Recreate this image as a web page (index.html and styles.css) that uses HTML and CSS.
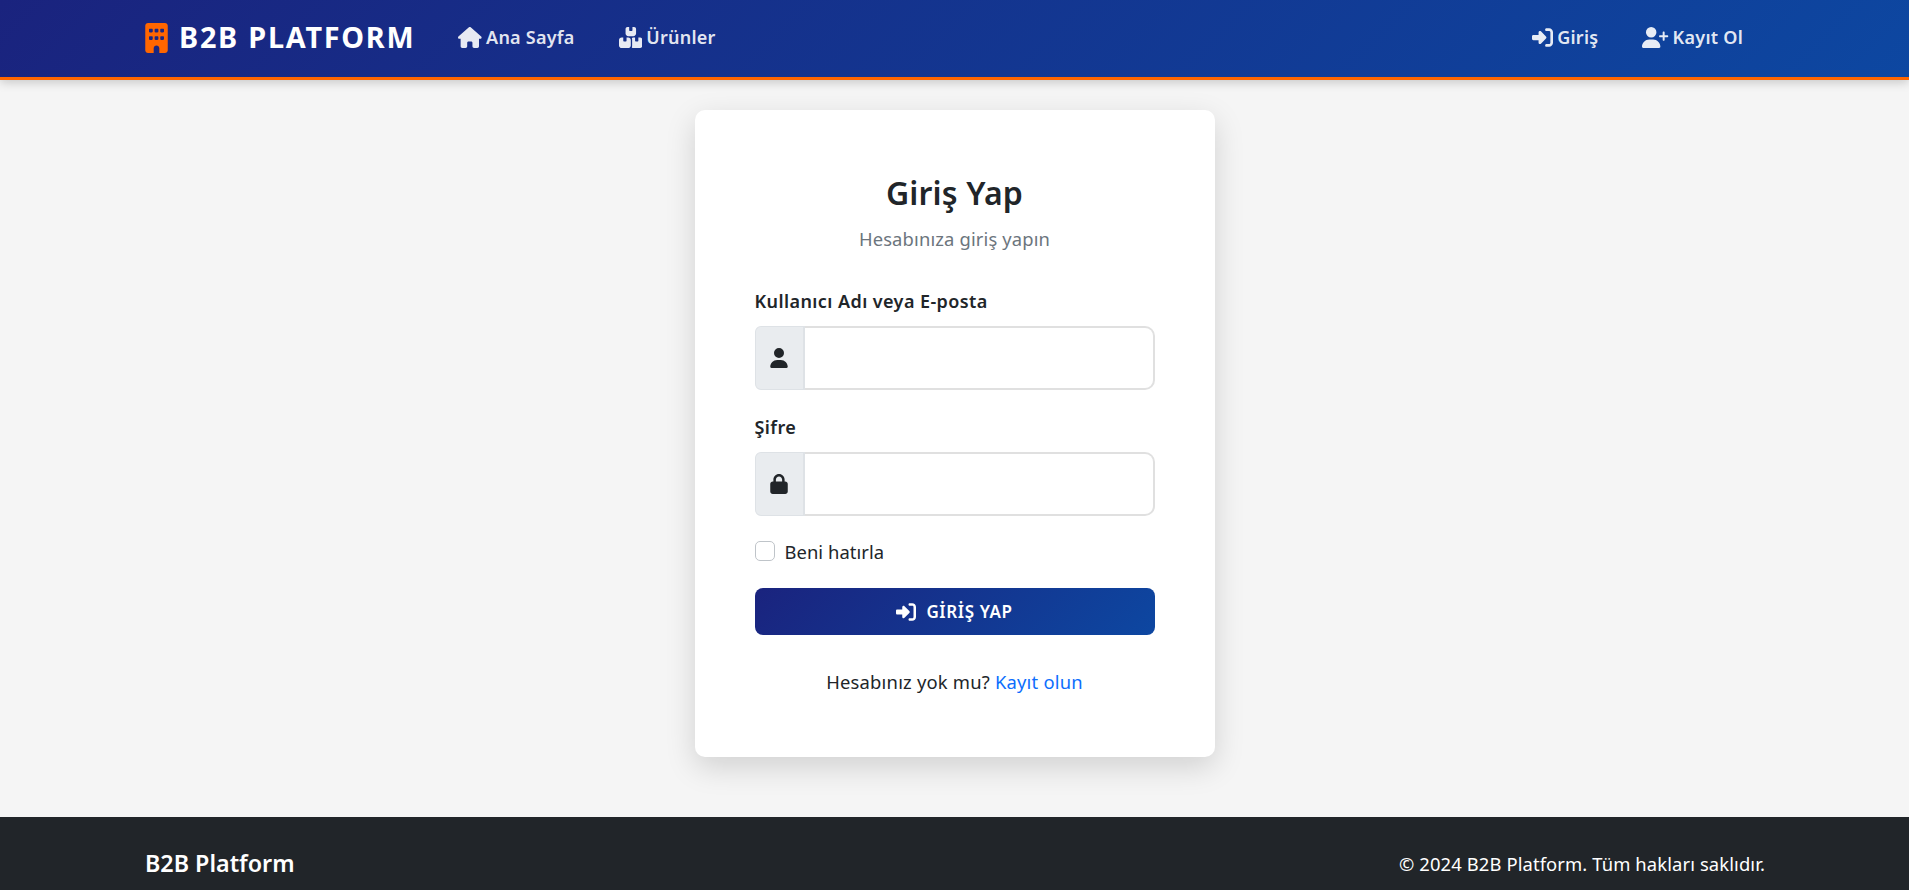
FILE: index.html
```html
<!DOCTYPE html>
<html lang="tr">
<head>
<meta charset="utf-8">
<title>Giriş Yap - B2B Platform</title>
<link rel="stylesheet" href="styles.css">
</head>
<body>
<header class="navbar">
  <a class="brand" href="#">
    <svg class="brand-icon" viewBox="0 0 384 512"><path d="M48 0C21.5 0 0 21.5 0 48V464c0 26.5 21.5 48 48 48h96V432c0-26.5 21.5-48 48-48s48 21.5 48 48v80h96c26.5 0 48-21.5 48-48V48c0-26.5-21.5-48-48-48H48zM64 240c0-8.8 7.2-16 16-16h32c8.8 0 16 7.2 16 16v32c0 8.8-7.2 16-16 16H80c-8.8 0-16-7.2-16-16V240zm112-16h32c8.8 0 16 7.2 16 16v32c0 8.8-7.2 16-16 16H176c-8.8 0-16-7.2-16-16V240c0-8.8 7.2-16 16-16zm80 16c0-8.8 7.2-16 16-16h32c8.8 0 16 7.2 16 16v32c0 8.8-7.2 16-16 16H272c-8.8 0-16-7.2-16-16V240zM80 96h32c8.8 0 16 7.2 16 16v32c0 8.8-7.2 16-16 16H80c-8.8 0-16-7.2-16-16V112c0-8.8 7.2-16 16-16zm80 16c0-8.8 7.2-16 16-16h32c8.8 0 16 7.2 16 16v32c0 8.8-7.2 16-16 16H176c-8.8 0-16-7.2-16-16V112zM272 96h32c8.8 0 16 7.2 16 16v32c0 8.8-7.2 16-16 16H272c-8.8 0-16-7.2-16-16V112c0-8.8 7.2-16 16-16z"/></svg>
    <span>B2B PLATFORM</span>
  </a>
  <nav class="nav-left">
    <a class="nav-link" href="#"><svg class="nav-icon" viewBox="0 0 576 512"><path d="M575.8 255.5c0 18-15 32.1-32 32.1h-32l.7 160.2c0 2.7-.2 5.4-.5 8.1V472c0 22.1-17.9 40-40 40H456c-1.1 0-2.2 0-3.3-.1c-1.4 .1-2.8 .1-4.2 .1H416 392c-22.1 0-40-17.9-40-40V448 384c0-17.7-14.3-32-32-32H256c-17.7 0-32 14.3-32 32v64 24c0 22.1-17.9 40-40 40H160 128.1c-1.5 0-3-.1-4.5-.2c-1.2 .1-2.4 .2-3.6 .2H104c-22.1 0-40-17.9-40-40V360c0-.9 0-1.9 .1-2.8V287.6H32c-18 0-32-14-32-32.1c0-9 3-17 10-24L266.4 8c7-7 15-8 22-8s15 2 21 7L564.8 231.5c8 7 12 15 11 24z"/></svg>Ana Sayfa</a>
    <a class="nav-link" href="#"><svg class="nav-icon" viewBox="0 0 576 512"><path d="M248 0H208c-26.5 0-48 21.5-48 48V160c0 35.3 28.7 64 64 64H352c35.3 0 64-28.7 64-64V48c0-26.5-21.5-48-48-48H328V80c0 8.8-7.2 16-16 16H264c-8.8 0-16-7.2-16-16V0zM64 256c-35.3 0-64 28.7-64 64V448c0 35.3 28.7 64 64 64H224c35.3 0 64-28.7 64-64V320c0-35.3-28.7-64-64-64H184v80c0 8.8-7.2 16-16 16H120c-8.8 0-16-7.2-16-16V256H64zM352 512H512c35.3 0 64-28.7 64-64V320c0-35.3-28.7-64-64-64H472v80c0 8.8-7.2 16-16 16H408c-8.8 0-16-7.2-16-16V256H352c-15 0-28.8 5.1-39.7 13.8c4.9 10.4 7.7 22 7.7 34.2V464c0 12.2-2.8 23.8-7.7 34.2C323.2 506.9 337 512 352 512z"/></svg>Ürünler</a>
  </nav>
  <nav class="nav-right">
    <a class="nav-link" href="#"><svg class="nav-icon" viewBox="0 0 512 512"><path d="M217.9 105.9L340.7 228.7c7.2 7.2 11.3 17.1 11.3 27.3s-4.1 20.1-11.3 27.3L217.9 406.1c-6.4 6.4-15 9.9-24.1 9.9c-18.7 0-33.9-15.2-33.9-33.9l0-62.1L32 320c-17.7 0-32-14.3-32-32l0-64c0-17.7 14.3-32 32-32l128 0 0-62.1c0-18.7 15.2-33.9 33.9-33.9c9 0 17.6 3.6 24.1 9.9zM352 416l64 0c17.7 0 32-14.3 32-32l0-256c0-17.7-14.3-32-32-32l-64 0c-17.7 0-32-14.3-32-32s14.3-32 32-32l64 0c53 0 96 43 96 96l0 256c0 53-43 96-96 96l-64 0c-17.7 0-32-14.3-32-32s14.3-32 32-32z"/></svg>Giriş</a>
    <a class="nav-link" href="#"><svg class="nav-icon" viewBox="0 0 640 512"><path d="M96 128a128 128 0 1 1 256 0A128 128 0 1 1 96 128zM0 482.3C0 383.8 79.8 304 178.3 304h91.4C368.2 304 448 383.8 448 482.3c0 16.4-13.3 29.7-29.7 29.7H29.7C13.3 512 0 498.7 0 482.3zM504 312V248H440c-13.3 0-24-10.7-24-24s10.7-24 24-24h64V136c0-13.3 10.7-24 24-24s24 10.7 24 24v64h64c13.3 0 24 10.7 24 24s-10.7 24-24 24H552v64c0 13.3-10.7 24-24 24s-24-10.7-24-24z"/></svg>Kayıt Ol</a>
  </nav>
</header>

<main class="main">
  <section class="card">
    <div class="card-head">
      <h1 class="title">Giriş Yap</h1>
      <p class="subtitle">Hesabınıza giriş yapın</p>
    </div>
    <form class="form">
      <div class="field">
        <label class="field-label" for="user">Kullanıcı Adı veya E-posta</label>
        <div class="input-group">
          <span class="input-addon"><svg class="addon-icon" viewBox="0 0 448 512"><path d="M224 256A128 128 0 1 0 224 0a128 128 0 1 0 0 256zm-45.7 48C79.8 304 0 383.8 0 482.3C0 498.7 13.3 512 29.7 512H418.3c16.4 0 29.7-13.3 29.7-29.7C448 383.8 368.2 304 269.7 304H178.3z"/></svg></span>
          <input class="input" id="user" type="text">
        </div>
      </div>
      <div class="field">
        <label class="field-label" for="pass">Şifre</label>
        <div class="input-group">
          <span class="input-addon"><svg class="addon-icon" viewBox="0 0 448 512"><path d="M144 144v48H304V144c0-44.2-35.8-80-80-80s-80 35.8-80 80zM80 192V144C80 64.5 144.5 0 224 0s144 64.5 144 144v48h16c35.3 0 64 28.7 64 64V448c0 35.3-28.7 64-64 64H64c-35.3 0-64-28.7-64-64V256c0-35.3 28.7-64 64-64H80z"/></svg></span>
          <input class="input" id="pass" type="password">
        </div>
      </div>
      <label class="check">
        <input class="check-box" type="checkbox">
        <span>Beni hatırla</span>
      </label>
      <button class="submit" type="button"><svg class="submit-icon" viewBox="0 0 512 512"><path d="M217.9 105.9L340.7 228.7c7.2 7.2 11.3 17.1 11.3 27.3s-4.1 20.1-11.3 27.3L217.9 406.1c-6.4 6.4-15 9.9-24.1 9.9c-18.7 0-33.9-15.2-33.9-33.9l0-62.1L32 320c-17.7 0-32-14.3-32-32l0-64c0-17.7 14.3-32 32-32l128 0 0-62.1c0-18.7 15.2-33.9 33.9-33.9c9 0 17.6 3.6 24.1 9.9zM352 416l64 0c17.7 0 32-14.3 32-32l0-256c0-17.7-14.3-32-32-32l-64 0c-17.7 0-32-14.3-32-32s14.3-32 32-32l64 0c53 0 96 43 96 96l0 256c0 53-43 96-96 96l-64 0c-17.7 0-32-14.3-32-32s14.3-32 32-32z"/></svg>GİRİŞ YAP</button>
    </form>
    <p class="signup">Hesabınız yok mu? <a href="#">Kayıt olun</a></p>
  </section>
</main>

<footer class="footer">
  <strong class="footer-brand">B2B Platform</strong>
  <span class="footer-copy">© 2024 B2B Platform. Tüm hakları saklıdır.</span>
</footer>
</body>
</html>
```
FILE: styles.css
```css
* { box-sizing: border-box; }
html, body { margin: 0; }
body {
  background: #f5f5f5;
  color: #212529;
  font-family: "Noto Sans", "Open Sans", sans-serif;
  font-size: 18px;
  line-height: 1.5;
}
a { text-decoration: none; }

.navbar {
  height: 80px;
  padding: 0 145px 2px;
  display: flex;
  align-items: center;
  background: linear-gradient(135deg, #1a237e 0%, #0d47a1 100%);
  border-bottom: 3px solid #ff6600;
  box-shadow: 0 2px 10px rgba(0, 0, 0, 0.2);
  position: relative;
}
.brand {
  display: flex;
  align-items: center;
  gap: 11px;
  color: #fff;
  font-size: 28.8px;
  font-weight: 700;
  letter-spacing: 1.75px;
  line-height: 1;
}
.brand-icon { width: 23px; height: 30px; fill: #ff6600; }
.nav-left { display: flex; gap: 44px; margin-left: 43px; }
.nav-right { display: flex; gap: 44px; margin-left: auto; margin-right: 21px; }
.nav-link {
  display: flex;
  align-items: center;
  gap: 4px;
  color: rgba(255, 255, 255, 0.9);
  font-weight: 600;
  font-size: 18px;
  letter-spacing: 0.25px;
}
.nav-icon { height: 21px; width: auto; fill: currentColor; }

.main { padding: 30px 0 60px; display: flex; justify-content: center; }
.card {
  width: 520px;
  height: 647px;
  padding: 60px;
  background: #fff;
  border-radius: 10px;
  box-shadow: 0 10px 30px rgba(0, 0, 0, 0.15);
}
.card-head { text-align: center; margin-bottom: 36px; }
.title { margin: 0; padding-top: 4px; font-size: 32px; font-weight: 600; line-height: 1.2; letter-spacing: 0.15px; }
.subtitle { margin: 13px 0 0; color: #6c757d; font-size: 18.4px; line-height: 27px; letter-spacing: 0.14px; }
.form { display: flex; flex-direction: column; }
.field { margin-bottom: 24px; }
.field-label { display: block; margin-bottom: 12px; font-weight: 600; font-size: 18px; line-height: 26px; letter-spacing: 0.42px; }
.input-group { display: flex; height: 64px; }
.input-addon {
  width: 50px;
  display: flex;
  align-items: center;
  justify-content: center;
  background: #e9ecef;
  border: 1px solid #dee2e6;
  border-right: 2px solid #dee2e6;
  border-radius: 6px 0 0 6px;
}
.addon-icon { width: 18px; height: 20px; fill: #212529; }
.input {
  flex: 1;
  min-width: 0;
  border: 2px solid #e0e0e0;
  border-left: 0;
  border-radius: 0 10px 10px 0;
  background: #fff;
  outline: none;
}
.check { display: flex; align-items: center; gap: 10px; height: 20px; margin-top: 1px; font-size: 18.4px; letter-spacing: 0.05px; }
.check-box {
  appearance: none;
  margin: 0;
  width: 20px;
  height: 20px;
  background: #fff;
  border: 1px solid #bfc4c9;
  border-radius: 5px;
}
.submit {
  margin-top: 27px;
  height: 47px;
  display: flex;
  align-items: center;
  justify-content: center;
  gap: 10px;
  color: #fff;
  background: linear-gradient(135deg, #1a237e 0%, #0d47a1 100%);
  border: 0;
  border-radius: 8px;
  font-family: inherit;
  font-size: 17px;
  font-weight: 600;
  letter-spacing: 0.6px;
}
.submit-icon { width: 20px; height: 20px; fill: currentColor; }
.signup { margin: 33px 0 0; text-align: center; font-size: 18.4px; line-height: 27px; letter-spacing: 0.2px; }
.signup a { color: #0d6efd; }

.footer {
  background: #212529;
  color: #fff;
  padding: 32px 144px 32px 145px;
  display: flex;
  align-items: center;
  justify-content: space-between;
}
.footer-brand { font-size: 23.3px; font-weight: 600; line-height: 29px; }
.footer-copy { font-size: 18.4px; letter-spacing: 0.11px; }
```
